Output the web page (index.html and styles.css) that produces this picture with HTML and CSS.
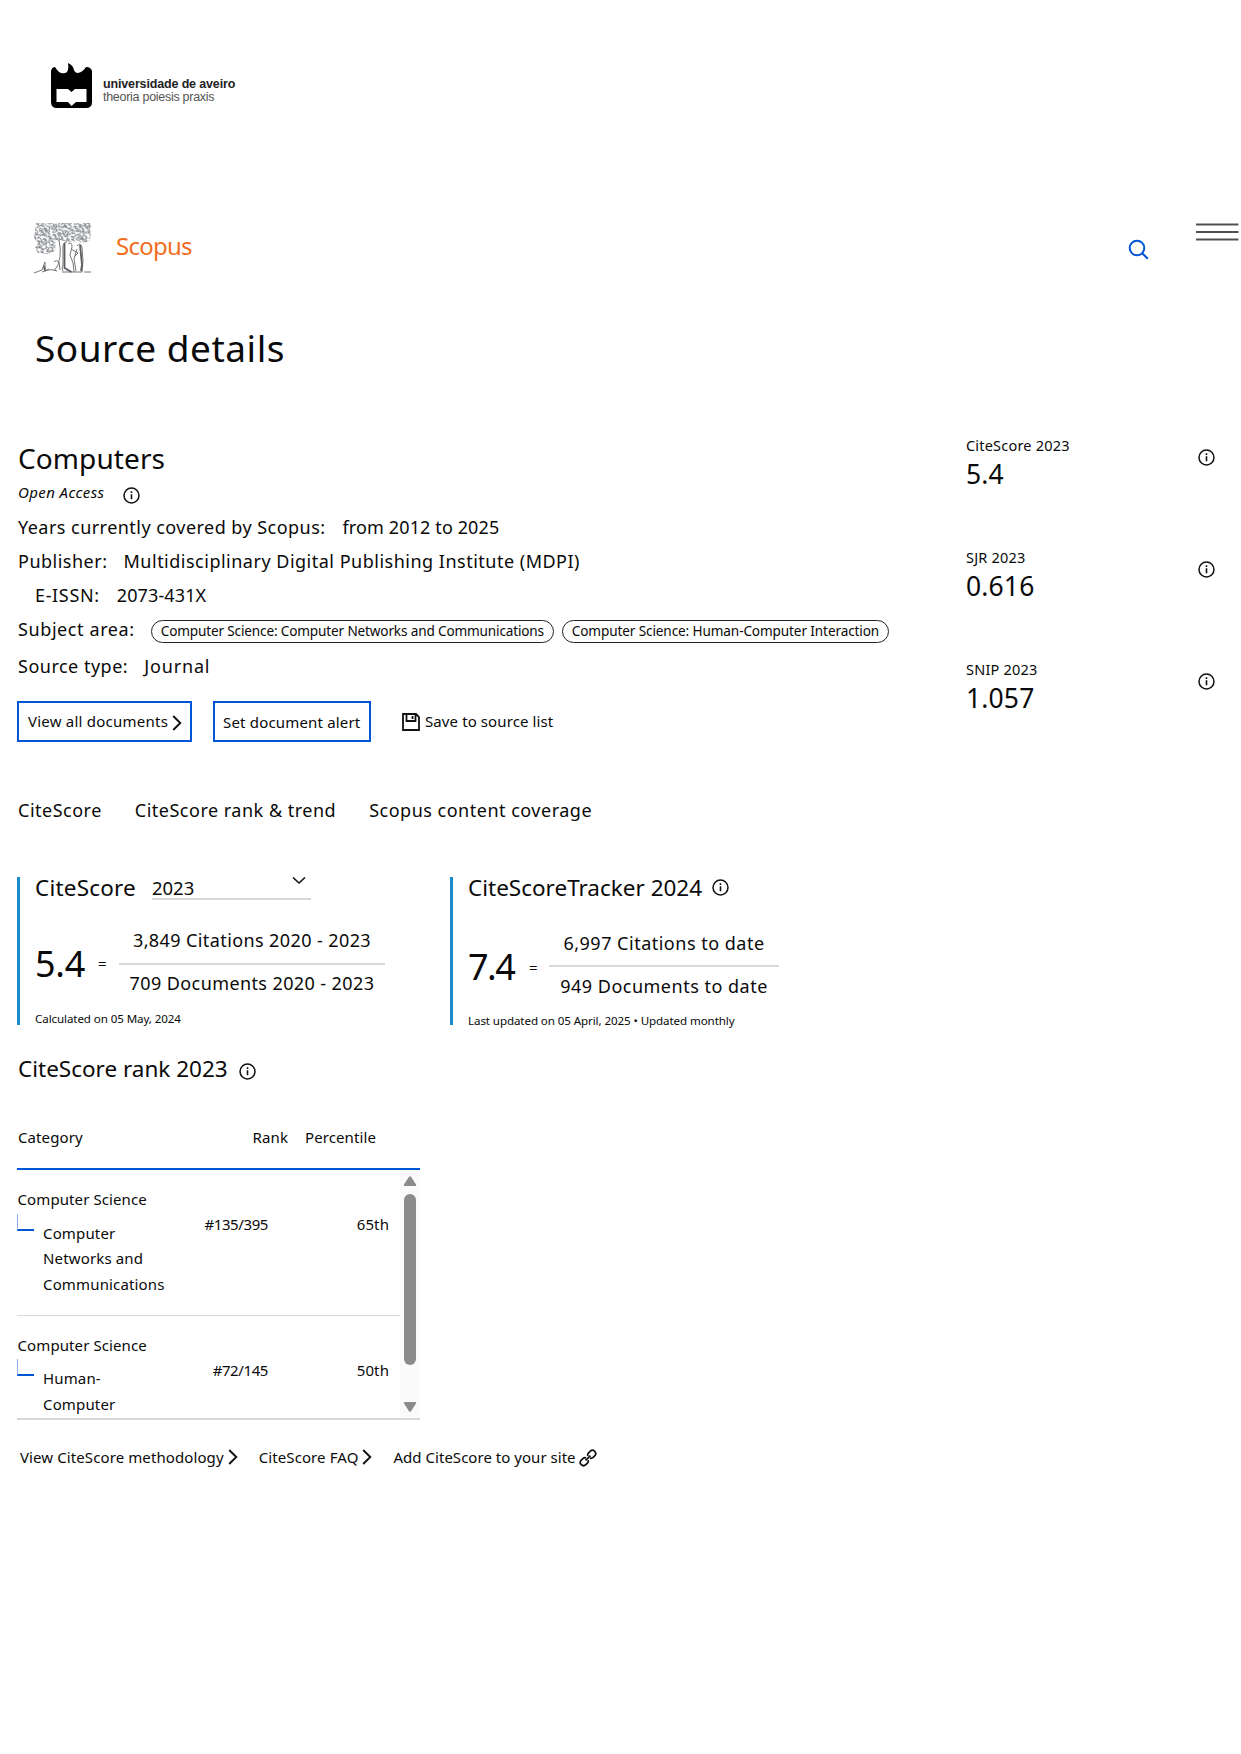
FILE: index.html
```html
<!DOCTYPE html>
<html lang="en">
<head>
<meta charset="utf-8">
<title>Scopus - Source details</title>
<link rel="stylesheet" href="styles.css">
</head>
<body>
<svg class="defs" width="0" height="0">
  <defs>
    <symbol id="info" viewBox="0 0 17 17"><circle cx="8.5" cy="8.5" r="7.5" fill="none" stroke="#111" stroke-width="1.5"/><path d="M8.500 7.300v5M8.500 4.200v1.700" stroke="#111" stroke-width="1.600"/></symbol>
    <symbol id="chevron" viewBox="0 0 10 16"><path d="M1.200 1 8.300 8 1.200 15" fill="none" stroke="#111" stroke-width="1.900"/></symbol>
    <pattern id="leaves" width="19" height="13" patternUnits="userSpaceOnUse" patternTransform="rotate(14)">
      <path d="M0 3q1-3 4-2t1 3-4 1M7 2q2-3 4 0t-1 3-3-1M13 1q4-1 4 2t-3 2-1-2M2 8q3-2 4 1t-3 3-2-2M8 7q4-1 4 2t-3 2M14 7q3-2 4 1t-3 3-2-2M6 12q2-2 4 0M0 12l2 1M6 5l2 2M12 5l2 1M18 5l-1 1" fill="none" stroke="#6a6e74" stroke-width=".9"/>
    </pattern>
    <pattern id="twigs" width="11" height="9" patternUnits="userSpaceOnUse" patternTransform="rotate(-22)">
      <path d="M1 2q2-2 3 0t-2 2M7 1q3 0 2 2t-3 1M3 7q1-2 3-1t0 2M9 6l1 2" fill="none" stroke="#6a6e74" stroke-width=".8"/>
    </pattern>
  </defs>
</svg>
<header class="university">
  <svg width="43" height="46" viewBox="0 0 43 46"><path d="M1 8Q2 4 5 4q3 5 6 6 4 1 6-1 2-3 1-9 5 2 6 7 1 3 4 3 5-1 8-6 5 0 6 4v31q0 6-6 6H7q-6 0-6-6z" fill="#000"/><path d="M6.500 26H18l3.500 3 3.500-3h11.500v13H26l-4.500 4L18 39H6.500z" fill="#fff"/></svg>
  <div class="university-name"><b>universidade de aveiro</b><span>theoria poiesis praxis</span></div>
</header>
<header class="masthead">
  <svg class="tree" width="58" height="52" viewBox="0 0 58 52">
    <g id="canopy">
      <path d="M2 1h54l1 4-1 14-8 2-4-2-11 1-7-2-4 2-1 9-8 3-9-1-3-5 3-5-4-5z" fill="url(#leaves)"/>
      <path d="M2 1h54l1 4-1 14-8 2-4-2-11 1-7-2-4 2-1 9-8 3-9-1-3-5 3-5-4-5z" fill="url(#twigs)"/>
    </g>
    <path d="M25 18q2 8 1 17-1 9-6 14M33 20q-4 0-4 5v18q-2 3 0 6M8 50q9-4 15-1M20 40q2-3 5 0l1 8M0 51l8-3 3-8v9l4-2M34 22q4-3 4 3l-2 8 3 8 1 9M37 27l7 4-3 3M43 24q3-4 5 1l1 14-1 11M43 27l-3 10 2 12M50 50h7M28 50h20" fill="none" stroke="#777" stroke-width="1"/>
    <path d="M30.500 21v25l7 4M46 23l2 20-1 6M10 44l1 5" fill="none" stroke="#5a5e63" stroke-width="1.800"/>
  </svg>
  <span class="brand">Scopus</span>
  <svg class="search" width="22" height="22" viewBox="0 0 22 22"><circle cx="9" cy="9" r="7.300" fill="none" stroke="#0056d6" stroke-width="2"/><path d="m14.200 14.200 5.600 5.600" stroke="#0056d6" stroke-width="2.200"/></svg>
  <svg class="menu" width="43" height="18" viewBox="0 0 43 18"><path d="M0 1.500h42.500M0 9h42.500M0 16.500h42.500" stroke="#505050" stroke-width="2"/></svg>
</header>
<h1>Source details</h1>
<main>
<section class="source">
  <div class="facts">
    <h2>Computers</h2>
    <div class="access"><em>Open Access</em><svg class="info"><use href="#info"/></svg></div>
    <div class="fact years"><span>Years currently covered by Scopus:</span><span class="figures">from 2012 to 2025</span></div>
    <div class="fact publisher"><span>Publisher:</span><span>Multidisciplinary Digital Publishing Institute (MDPI)</span></div>
    <div class="fact issn"><span>E-ISSN:</span><span class="figures">2073-431X</span></div>
    <div class="fact subject"><span>Subject area:</span><div class="tags"><div class="tag tag-a">Computer Science: Computer Networks and Communications</div><div class="tag tag-b">Computer Science: Human-Computer Interaction</div></div></div>
    <div class="fact type"><span>Source type:</span><span class="journal">Journal</span></div>
    <div class="actions">
      <a class="button view"><span>View all documents</span><svg width="10" height="16"><use href="#chevron"/></svg></a>
      <a class="button alert">Set document alert</a>
      <a class="save"><svg width="18" height="18" viewBox="0 0 18 18" fill="none" stroke="#111" stroke-width="1.800"><path d="M1 1v16h16V4l-3-3zM4.500 1v7h9V1M10.500 3v3"/></svg><span>Save to source list</span></a>
    </div>
  </div>
  <aside class="metrics">
    <div class="metric"><div><small>CiteScore 2023</small><strong>5.4</strong></div><svg class="info"><use href="#info"/></svg></div>
    <div class="metric"><div><small>SJR 2023</small><strong>0.616</strong></div><svg class="info"><use href="#info"/></svg></div>
    <div class="metric"><div><small>SNIP 2023</small><strong>1.057</strong></div><svg class="info"><use href="#info"/></svg></div>
  </aside>
</section>
<nav class="tabs"><span>CiteScore</span><span>CiteScore rank &amp; trend</span><span>Scopus content coverage</span></nav>
<section class="cards">
  <article class="card first">
    <div class="card-title"><span>CiteScore</span><div class="select"><span>2023</span><svg width="14" height="9" viewBox="0 0 14 9"><path d="m1 .500 6 5.500L13 .500" fill="none" stroke="#111" stroke-width="1.600"/></svg></div></div>
    <div class="formula"><strong>5.4</strong><span class="equals">=</span><div class="fraction"><div>3,849 Citations 2020 - 2023</div><div>709 Documents 2020 - 2023</div></div></div>
    <p>Calculated on 05 May, 2024</p>
  </article>
  <article class="card second">
    <div class="card-title"><span>CiteScoreTracker 2024</span><svg class="info"><use href="#info"/></svg></div>
    <div class="formula"><strong>7.4</strong><span class="equals">=</span><div class="fraction"><div>6,997 Citations to date</div><div>949 Documents to date</div></div></div>
    <p>Last updated on 05 April, 2025 • Updated monthly</p>
  </article>
</section>
<section class="rank">
  <div class="rank-title"><span>CiteScore rank 2023</span><svg class="info"><use href="#info"/></svg></div>
  <div class="table-head"><span>Category</span><span class="head-rank">Rank</span><span>Percentile</span></div>
  <div class="table-body">
    <div class="rows">
      <div class="row"><div class="category"><span>Computer Science</span><div class="sub"><i></i><div>Computer<br>Networks and<br>Communications</div></div></div><span class="position">#135/395</span><span class="percent">65th</span></div>
      <div class="row"><div class="category"><span>Computer Science</span><div class="sub"><i></i><div>Human-<br>Computer</div></div></div><span class="position">#72/145</span><span class="percent">50th</span></div>
    </div>
    <svg class="scrollbar" width="20" height="248" viewBox="0 0 20 248" fill="#8b8b8b"><path d="M4 14.500 9 6.800q1-1.300 2 0l5 7.700q.5 1.500-1 1.500H5q-1.500 0-1-1.500zM4 233.500l5 7.700q1 1.300 2 0l5-7.700q.5-1.500-1-1.500H5q-1.500 0-1 1.500z"/><rect x="4" y="24" width="12" height="171" rx="6"/></svg>
  </div>
</section>
<nav class="links">
  <a><span>View CiteScore methodology</span><svg width="10" height="16"><use href="#chevron"/></svg></a>
  <a><span>CiteScore FAQ</span><svg width="10" height="16"><use href="#chevron"/></svg></a>
  <a class="embed"><span>Add CiteScore to your site</span><svg width="18" height="18" viewBox="0 0 18 18" fill="none" stroke="#111" stroke-width="1.700"><g transform="rotate(-45 9 9)"><path d="M7.500 11.600h-3a3.300 3.300 0 0 1-3.300-3.300v0M6.800 12.200H2.500a3.200 3.200 0 0 1 0-6.400h2.300a3.200 3.200 0 0 1 3 2.200M11.200 5.800h4.300a3.200 3.200 0 0 1 0 6.400h-2.300a3.200 3.200 0 0 1-3-2.200M6 9h6" stroke="none"/><path d="M7.700 10.500a3.200 3.200 0 0 1-2.700 1.700H2.700a3.200 3.200 0 0 1 0-6.400H5a3.200 3.200 0 0 1 2.700 1.700M10.300 7.500A3.200 3.200 0 0 1 13 5.800h2.300a3.200 3.200 0 0 1 0 6.400H13a3.200 3.200 0 0 1-2.700-1.700M5.500 9h7"/></g></svg></a>
</nav>
</main>
</body>
</html>
```
FILE: styles.css
```css
* { box-sizing: border-box; }
body { margin: 0; background: #fff; color: #0a0a0a; font: 18px/34px "Noto Sans", sans-serif; white-space: nowrap; }
svg { display: block; flex: none; }
.defs { position: absolute; }
h1, h2, p { margin: 0; font-weight: 400; }
strong { font-weight: 400; }
.info { width: 17px; height: 17px; }

.university { display: flex; gap: 10px; height: 215px; padding: 63px 0 0 50px; }
.university-name { display: flex; flex-direction: column; padding-top: 14px; font: 12.500px/14px "Liberation Sans", sans-serif; letter-spacing: -.15px; }
.university-name b { color: #222; }
.university-name span { color: #555; line-height: 13px; letter-spacing: -.28px; }

.masthead { display: flex; height: 103px; padding: 7px 2px 0 34px; }
.brand { margin-left: 24px; color: #f36d21; font-size: 24px; line-height: 47px; letter-spacing: -.75px; }
.search { margin: 17px 46px 0 auto; }
.menu { margin-top: 1px; }
h1 { height: 60px; padding-left: 35px; font-size: 37px; line-height: 60px; letter-spacing: .5px; }

main { padding-left: 17px; }
.source { display: grid; grid-template-columns: 949px 1fr; height: 364px; padding-top: 61px; }
h2 { padding-left: 1px; font-size: 28px; line-height: 39px; height: 40px; letter-spacing: .1px; }
.access { display: flex; gap: 19px; height: 26px; margin-bottom: 5px; padding-left: 1px; font-size: 15px; line-height: 26px; letter-spacing: .4px; }
.access .info { margin-top: 8px; }
.fact { display: flex; gap: 17px; height: 34px; padding-left: 1px; letter-spacing: .5px; }
.years { letter-spacing: .46px; }
.publisher { gap: 16px; }
.figures { letter-spacing: .12px; }
.issn { padding-left: 18px; letter-spacing: .65px; }
.subject { gap: 16px; letter-spacing: .6px; }
.type { gap: 16px; height: 40px; line-height: 40px; }
.journal { letter-spacing: .85px; }
.tags { display: flex; gap: 8px; padding-top: 8px; }
.tag { height: 23px; padding-left: 9px; border: 1px solid #222; border-radius: 12px; font-size: 13.600px; line-height: 20px; letter-spacing: -.16px; }
.tag-a { width: 403px; }
.tag-b { width: 327px; letter-spacing: -.12px; }
.actions { display: flex; height: 41px; margin-top: 15px; font-size: 15px; line-height: 37px; letter-spacing: .23px; }
.button { display: flex; height: 41px; padding-left: 9px; border: 2px solid #0056d6; }
.view { width: 175px; gap: 4px; }
.view svg { margin-top: 12px; }
.alert { width: 158px; margin-left: 21px; padding-left: 8px; line-height: 38px; letter-spacing: .18px; }
.save { display: flex; gap: 5px; margin-left: 31px; line-height: 40px; letter-spacing: .1px; }
.save svg { margin-top: 12px; }

.metric { display: flex; justify-content: space-between; height: 112px; padding-right: 26px; }
.metric div { display: flex; flex-direction: column; }
.metric small { margin-top: -6px; font-size: 14.500px; line-height: 24px; letter-spacing: .2px; }
.metric strong { font-size: 26.500px; line-height: 34px; letter-spacing: .15px; }
.metric .info { margin-top: 10px; }

.tabs { display: flex; gap: 33px; margin-top: 53px; padding-left: 1px; line-height: 30px; letter-spacing: .5px; }
.cards { display: flex; margin-top: 52px; }
.card { height: 148px; padding-left: 15px; border-left: 3px solid #1a8ccb; }
.first { width: 433px; }
.card-title { display: flex; gap: 16px; height: 24px; font-size: 22.500px; line-height: 22px; }
.first .card-title { letter-spacing: .2px; }
.second .card-title { gap: 10px; }
.second .info { margin-top: 2px; }
.select { display: flex; justify-content: space-between; width: 159px; height: 23px; padding-right: 5px; border-bottom: 2px solid #d9d9d9; font-size: 18.500px; letter-spacing: 0; }
.formula { display: flex; height: 108px; padding-top: 22px; }
.formula strong { width: 51px; font-size: 36px; line-height: 82px; letter-spacing: -.3px; }
.equals { width: 33px; padding-left: 12px; font-size: 15px; line-height: 81px; }
.fraction { width: 266px; text-align: center; letter-spacing: .4px; }
.fraction div { height: 40px; line-height: 34px; }
.fraction div:last-child { border-top: 2px solid #d9d9d9; line-height: 37px; }
.second .formula { padding-top: 25px; }
.second .formula strong { width: 49px; letter-spacing: -1.500px; }
.second .equals { width: 32px; line-height: 82px; }
.second .fraction { width: 230px; letter-spacing: .5px; }
.second .fraction div:first-child { height: 39px; }
.second .fraction div:last-child { line-height: 39px; }
.card p { font-size: 11.600px; line-height: 19px; letter-spacing: -.1px; }
.second p { padding-top: 2px; }

.rank-title { display: flex; gap: 11px; height: 30px; margin-top: 28px; padding-left: 1px; font-size: 22.500px; line-height: 31px; }
.rank-title .info { margin-top: 10px; }
.table-head { display: flex; width: 403px; height: 47px; margin-top: 40px; padding-left: 1px; border-bottom: 2px solid #0056d6; font-size: 15px; line-height: 29px; letter-spacing: .1px; }
.head-rank { margin: 0 17px 0 auto; }
.table-head span:last-child { margin-right: 44px; }
.table-body { display: flex; width: 403px; height: 250px; overflow: hidden; border-bottom: 2px solid #d9d9d9; font-size: 15px; line-height: 25.500px; letter-spacing: .1px; }
.rows { width: 383px; }
.row { display: grid; grid-template-columns: 157px 95px 1fr; height: 145.500px; padding: 17px 11px 0 0; border-bottom: 1px solid #d9d9d9; }
.category > span { padding-left: .5px; }
.sub { display: flex; gap: 9px; padding-top: 1px; }
.sub div { padding-top: 7px; letter-spacing: .15px; }
.sub i { width: 17px; height: 17px; border-left: 1px solid #8ab0ee; border-bottom: 2px solid #0056d6; }
.position, .percent { padding-top: 25px; text-align: right; }
.position { padding-right: 1px; letter-spacing: -.4px; }
.scrollbar { background: #fafafa; }

.links { display: flex; gap: 21px; padding-left: 3px; margin-top: 24px; font-size: 15px; line-height: 26px; letter-spacing: .1px; }
.links a { display: flex; gap: 4px; }
.links svg { margin-top: 5px; }
.links .embed { gap: 3px; letter-spacing: .03px; }
```
